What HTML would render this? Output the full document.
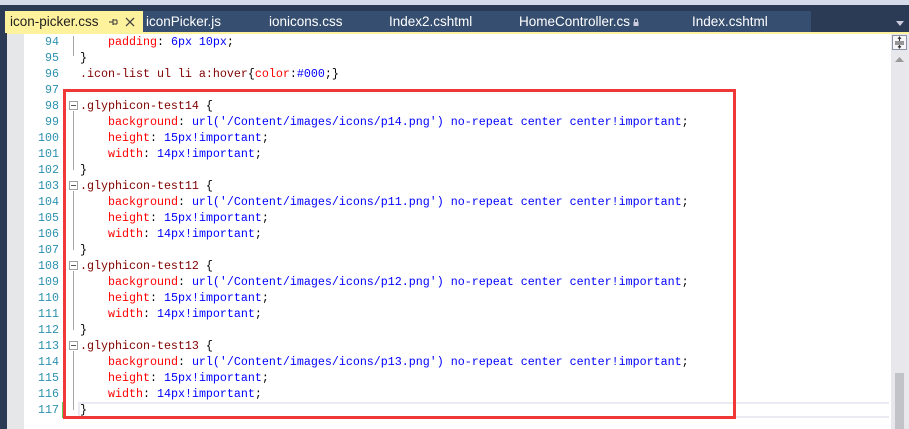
<!DOCTYPE html>
<html><head><meta charset="utf-8"><style>
*{margin:0;padding:0;box-sizing:border-box}
body{width:909px;height:429px;overflow:hidden;background:#fff;position:relative;font-family:"Liberation Sans",sans-serif}
.top{position:absolute;left:0;top:0;width:909px;height:5px;background:#d6dbe9}
.band{position:absolute;left:0;top:5px;width:909px;height:28px;background:#2b3a55}
.tabs{position:absolute;left:5px;top:11px;width:806px;height:21px;background:#364e6f}
.tab{position:absolute;top:11px;height:21px;line-height:21px;font-size:13.5px;color:#fff}
.act{left:5px;width:138px;background:#fff29d;color:#1e1e1e;padding-left:5px}
.yl{position:absolute;left:5px;top:32px;width:904px;height:2px;background:#fff29d}
.lstrip{position:absolute;left:0;top:33px;width:7px;height:396px;background:#2b3a55}
.gut{position:absolute;left:7px;top:34px;width:17px;height:395px;background:#e6e7e8}
.ln{position:absolute;left:24px;width:35px;text-align:right;color:#2b91af}
.ln,.c{font-family:"Liberation Mono",monospace;font-size:11.67px;height:16px;line-height:16px;white-space:pre}
.c{position:absolute;left:80px;color:#000}
.s{color:#800000}.p{color:#ff0000}.v{color:#0000ff}
.box{position:absolute;left:63px;top:89px;width:673px;height:330px;border:3px solid #f03838}
.fold{position:absolute;left:69px;width:9px;height:9px;border:1px solid #a0a0a0;background:#fff}
.fold:after{content:"";position:absolute;left:1px;top:3px;width:5px;height:1px;background:#555}
.vl{position:absolute;left:73px;width:1px;background:#a5a5a5}
.sb{position:absolute;left:891px;top:34px;width:18px;height:395px;background:#e8e8ec}
.thumb{position:absolute;left:895px;top:373px;width:9px;height:56px;background:#c2c3c9}
.cur{position:absolute;left:78px;top:402px;width:811px;height:16px;border:2px solid #eaeaf2;border-right:none}
</style></head><body>
<div class="top"></div><div class="band"></div><div class="tabs"></div>
<div class="tab act">icon-picker.css</div>
<svg style="position:absolute;left:107px;top:16px" width="30" height="12" viewBox="0 0 30 12">
<path d="M2 6H6M6 3V9M6 4H10M6 8H10M10 4V8" stroke="#333" fill="none" stroke-width="1"/>
<path d="M19 2L27 10M27 2L19 10" stroke="#444" stroke-width="1.3"/></svg>
<div class="tab" style="left:146px">iconPicker.js</div>
<div class="tab" style="left:269px">ionicons.css</div>
<div class="tab" style="left:389px">Index2.cshtml</div>
<div class="tab" style="left:519px">HomeController.cs</div>
<svg style="position:absolute;left:633px;top:18px" width="6" height="8" viewBox="0 0 6 8"><path d="M1.5 4V2.5A1.5 1.5 0 0 1 4.5 2.5V4" stroke="#ccd" fill="none"/><rect x="0.5" y="4" width="5" height="4" fill="#ccd"/></svg>
<div class="tab" style="left:692px">Index.cshtml</div>
<svg style="position:absolute;left:896px;top:21px" width="8" height="5"><path d="M0 0H8L4 5Z" fill="#ccd"/></svg>
<div class="yl"></div>
<div class="lstrip"></div><div class="gut"></div>
<div class="sb"></div>
<div style="position:absolute;left:892px;top:35px;width:15px;height:15px;border:1px solid #8a92a8;background:#f6f6f8"></div>
<svg style="position:absolute;left:893px;top:36px" width="13" height="13"><path d="M2 6H11M2 8H11M6.5 1V5M6.5 9V12M5 3L6.5 1L8 3M5 10L6.5 12L8 10" stroke="#333" fill="none"/></svg>
<svg style="position:absolute;left:895px;top:57px" width="9" height="5"><path d="M0 5H9L4.5 0Z" fill="#999"/></svg>
<div class="thumb"></div>
<div class="cur"></div>
<div class="vl" style="top:36px;height:20px"></div>
<div id="code"></div>
<script>
var L=[];
function add(n,h){L.push([n,h]);}
add(94,'    <span class="p">padding</span>: <span class="v">6px 10px</span>;');
add(95,'}');
add(96,'<span class="s">.icon-list ul li a:hover</span>{<span class="p">color</span>:<span class="v">#000</span>;}');
add(97,'');
var ids=['14','11','12','13'],n=98;
ids.forEach(function(i){
add(n++,'<span class="s">.glyphicon-test'+i+'</span> {');
add(n++,'    <span class="p">background</span>: <span class="v">url(\'/Content/images/icons/p'+i+'.png\') no-repeat center center!important</span>;');
add(n++,'    <span class="p">height</span>: <span class="v">15px!important</span>;');
add(n++,'    <span class="p">width</span>: <span class="v">14px!important</span>;');
add(n++,'}');
});
var h='';
L.forEach(function(a){var y=34+(a[0]-94)*16;
h+='<div class="ln" style="top:'+y+'px">'+a[0]+'</div><div class="c" style="top:'+y+'px">'+a[1]+'</div>';
if(a[0]>=98&&(a[0]-98)%5==0){h+='<div class="fold" style="top:'+(y+3)+'px"></div><div class="vl" style="top:'+(y+13)+'px;height:59px"></div>';}
});
document.getElementById('code').innerHTML=h;
</script>
<div style="position:absolute;left:62px;top:402px;width:3px;height:16px;background:#5fd35f"></div>
<div class="box"></div>
</body></html>
